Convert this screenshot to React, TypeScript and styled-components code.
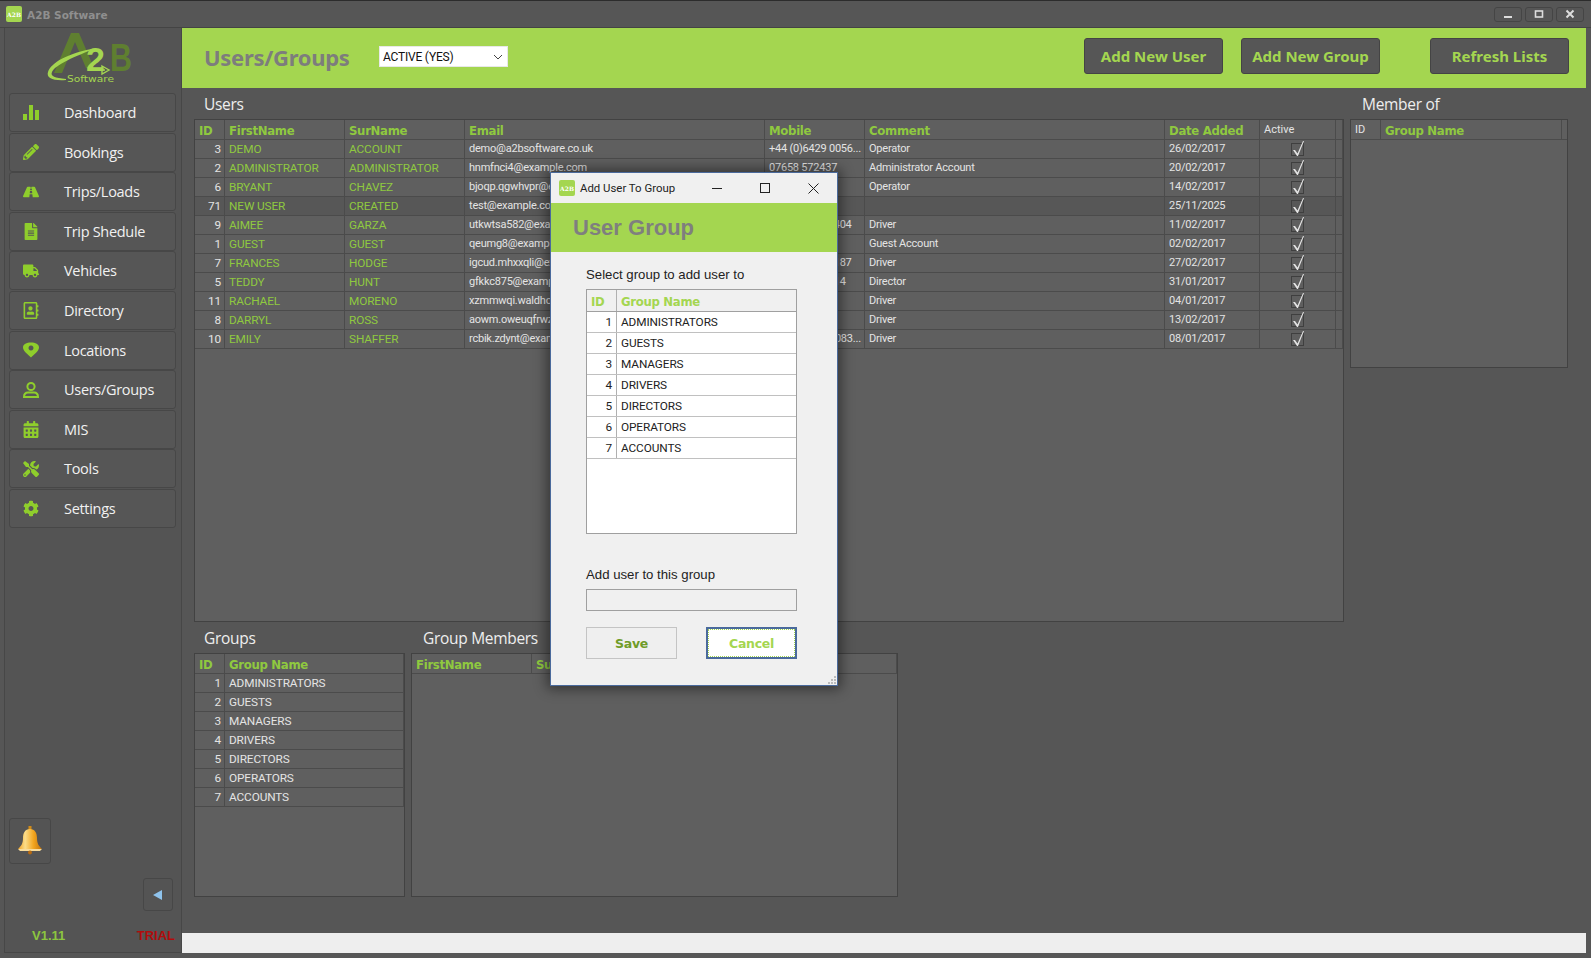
import React from "react";
import styled, { createGlobalStyle } from "styled-components";
import { FaPencilAlt, FaRoad, FaFileAlt, FaTruck, FaRegAddressBook, FaCalendarAlt, FaTools, FaCog } from "react-icons/fa";

const Global = createGlobalStyle`
  html, body { margin: 0; padding: 0; height: 100%; background: #565656; overflow: hidden; }
  #root { height: 100%; }
  * { box-sizing: border-box; }
`;

const GREEN = "#a4d650";
const TEXTGREEN = "#8fc93f";
const LINE = "#4b4b4b";

const Win = styled.div`
  position: relative; width: 1591px; height: 958px; background: #565656;
  font-family: "Roboto", "Liberation Sans", sans-serif; display: flex; flex-direction: column;
  border-top: 1px solid #2c2c2c;
`;
const TitleBar = styled.div`
  height: 27px; flex: none; display: flex; align-items: center; padding: 0 7px 0 6px; gap: 5px;
  border-bottom: 1px solid #444;
`;
const AppName = styled.div`
  font: bold 10.5px "DejaVu Sans", sans-serif; color: #8f8f8f; flex: 1; padding-top: 2px;
`;
const AppIcon = styled.div<{ $s: number }>`
  width: ${p => p.$s}px; height: ${p => p.$s}px; background: ${GREEN}; border-radius: 2px; color: #fff;
  font: bold 6px "DejaVu Serif", serif; display: flex; align-items: center; justify-content: center; flex: none;
`;
const WinBtns = styled.div` display: flex; gap: 3px; `;
const WinBtn = styled.div`
  width: 28px; height: 15px; border: 1px solid #454545; border-radius: 3px; display: flex; align-items: center; justify-content: center; color: #ddd;
`;
const Body = styled.div` flex: 1; display: flex; padding: 0 5px 5px 4px; min-height: 0; `;
const Side = styled.div`
  width: 178px; flex: none; border: 1px solid #474747; border-top: none; background: #545454;
  display: flex; flex-direction: column; padding: 0 5px 0 4px; position: relative;
`;
const LogoBox = styled.div` height: 65px; flex: none; display: flex; justify-content: flex-start; padding: 3px 0 0 30px; `;
const Nav = styled.div` display: flex; flex-direction: column; gap: 0.6px; `;
const NavItem = styled.div`
  height: 39px; border: 1px solid #474747; border-radius: 3px; display: flex; align-items: center;
  padding-left: 13px; gap: 25px; color: #f1f1f1; background: #565656;
  font: 14.5px "Open Sans", sans-serif; letter-spacing: -0.3px;
`;
const NavIcon = styled.div`
  width: 16px; height: 18px; display: flex; align-items: center; justify-content: center; flex: none; color: #8fce2c;
`;
const SideSpacer = styled.div` flex: 1; `;
const BellBtn = styled.div`
  width: 42px; height: 46px; border: 1px solid #474747; border-radius: 3px; display: flex; align-items: center; justify-content: center; margin-bottom: 14px;
`;
const ArrowRow = styled.div` display: flex; justify-content: flex-end; padding-right: 3px; `;
const ArrowBtn = styled.div`
  width: 30px; height: 33px; border: 1px solid #474747; border-radius: 3px; display: flex; align-items: center; justify-content: center;
`;
const SideFoot = styled.div`
  display: flex; justify-content: space-between; padding: 7px 1px 0 23px; height: 41px; align-items: center;
  font: bold 13px "Liberation Sans", sans-serif;
`;
const Ver = styled.span` color: #8cc63f; `;
const Trial = styled.span` color: #b00c0c; `;

const Main = styled.div` flex: 1; display: flex; flex-direction: column; min-width: 0; `;
const Header = styled.div`
  height: 60px; flex: none; background: ${GREEN}; display: flex; align-items: center; padding: 0 17px 4px 22px;
`;
const PageTitle = styled.div`
  font: bold 22px "Noto Sans", sans-serif; color: #7d7d7d; width: 175px; letter-spacing: -0.3px; margin-top: 1px;
`;
const Select = styled.div`
  width: 129px; height: 21px; background: #fff; border: 1px solid #e8e8e8; color: #111; font: 12px "Roboto", sans-serif;
  display: flex; align-items: center; justify-content: space-between; padding: 0 4px 0 3px; letter-spacing: -0.2px; margin-top: 1px;
`;
const HeadSpace = styled.div<{ $w?: number }>` flex: ${p => (p.$w ? "none" : 1)}; width: ${p => p.$w || 0}px; `;
const HeadBtn = styled.div`
  width: 139px; height: 36px; background: #565656; border: 1px solid #444; border-radius: 3px; color: ${GREEN};
  font: bold 15px "Noto Sans", sans-serif; display: flex; align-items: center; justify-content: center;
`;
const Content = styled.div` flex: 1; display: flex; flex-direction: column; padding: 0 17px 0 12px; min-height: 0; `;
const TopRow = styled.div` display: flex; gap: 6px; height: 534px; flex: none; `;
const BotRow = styled.div` display: flex; gap: 6px; height: 275px; flex: none; `;
const Col = styled.div<{ $w: number }>` width: ${p => p.$w}px; flex: none; display: flex; flex-direction: column; `;
const Label = styled.div<{ $ml?: number }>`
  height: 31px; flex: none; color: #eee; font: 15.5px "Open Sans", sans-serif; letter-spacing: -0.3px;
  padding: 5px 0 0 ${p => p.$ml ?? 10}px;
`;
const Grid = styled.div<{ $h?: number }>`
  flex: ${p => (p.$h ? "none" : 1)}; height: ${p => (p.$h ? `${p.$h}px` : "auto")};
  border: 1px solid #424242; background: #5f5f5f; overflow: hidden; position: relative;
`;
const Row = styled.div<{ $cols: string; $sel?: boolean; $h?: number }>`
  display: grid; grid-template-columns: ${p => p.$cols}; height: ${p => p.$h ?? 19}px;
  border-bottom: 1px solid ${LINE}; background: ${p => (p.$sel ? "#575757" : "transparent")};
`;
const Cell = styled.div<{ $c?: string; $right?: boolean; $small?: boolean }>`
  border-right: 1px solid ${LINE}; padding: 0 ${p => (p.$right ? 3 : 2)}px 1px 4px; display: flex; align-items: center; overflow: hidden; white-space: nowrap;
  justify-content: ${p => (p.$right ? "flex-end" : "flex-start")};
  font: ${p => (p.$small ? "11px" : "11.8px")} "Roboto", sans-serif; color: ${p => p.$c || "#e4e4e4"};
  letter-spacing: ${p => (p.$small ? "-0.22px" : "-0.12px")};
`;
const HCell = styled(Cell)<{ $plain?: boolean }>`
  font: ${p => (p.$plain ? "11px \"Roboto\", sans-serif" : "bold 11.7px \"DejaVu Sans\", sans-serif")};
  color: ${p => (p.$plain ? "#e4e4e4" : TEXTGREEN)}; letter-spacing: ${p => (p.$plain ? "0" : "-0.3px")};
  align-items: center; padding-top: ${p => (p.$plain ? 0 : 3)}px; padding-bottom: ${p => (p.$plain ? 1 : 0)}px;
`;
const CheckCell = styled(Cell)` justify-content: center; padding: 0; `;
const CheckBox = styled.div`
  width: 13px; height: 13px; border: 1px solid #3f3f3f; position: relative;
  svg { position: absolute; top: -3px; left: -1px; }
`;

const Dialog = styled.div`
  position: absolute; left: 550px; top: 171px; width: 288px; height: 514px; background: #f0f0f0;
  border: 1px solid #4a6a9c; box-shadow: 0 0 12px 3px rgba(0,0,0,.45); display: flex; flex-direction: column;
`;
const MTitle = styled.div`
  height: 30px; flex: none; display: flex; align-items: center; padding-left: 8px; font: 11.4px "Roboto", sans-serif; color: #222;
`;
const MTitleText = styled.div` flex: 1; white-space: nowrap; padding-left: 5px; `;
const MCtrl = styled.div` width: 48px; height: 30px; flex: none; display: flex; align-items: center; justify-content: center; color: #222; `;
const MBand = styled.div`
  height: 49px; flex: none; background: ${GREEN}; color: #7f7f7f; font: bold 22px "Liberation Sans", sans-serif; display: flex; align-items: center; padding: 0 0 0 22px;
`;
const MBody = styled.div` flex: 1; padding: 15px 40px 0 35px; display: flex; flex-direction: column; position: relative; `;
const MLabel = styled.div<{ $mt?: number }>`
  font: 13.2px "Liberation Sans", sans-serif; color: #222; height: 22px; margin-top: ${p => p.$mt ?? 0}px; white-space: nowrap;
`;
const MGrid = styled.div` height: 245px; flex: none; background: #fff; border: 1px solid #9f9f9f; `;
const MRow = styled.div<{ $h?: boolean }>`
  display: grid; grid-template-columns: 30px 1fr; height: ${p => (p.$h ? 22 : 21)}px; background: ${p => (p.$h ? "#f0f0f0" : "#fff")};
  border-bottom: 1px solid ${p => (p.$h ? "#a0a0a0" : "#c0c0c0")};
`;
const MCell = styled.div<{ $right?: boolean; $last?: boolean }>`
  border-right: ${p => (p.$last ? "none" : "1px solid #b0b0b0")}; padding: 0 4px; display: flex; align-items: center; font: 11.8px "Roboto", sans-serif; color: #222;
  justify-content: ${p => (p.$right ? "flex-end" : "flex-start")}; letter-spacing: -0.1px;
`;
const MHCell = styled(MCell)`
  font: bold 11.7px "DejaVu Sans", sans-serif; color: #a4d650; letter-spacing: -0.3px; padding-top: 3px;
`;
const MInput = styled.div` height: 22px; flex: none; border: 1px solid #9f9f9f; `;
const MBtns = styled.div` display: flex; justify-content: space-between; margin-top: 16px; `;
const MBtn = styled.div<{ $primary?: boolean }>`
  width: 91px; height: 32px; display: flex; align-items: center; justify-content: center; font: bold 12.5px "DejaVu Sans", sans-serif; letter-spacing: -0.3px;
  background: ${p => (p.$primary ? "#fff" : "#efefef")};
  color: ${p => (p.$primary ? "#a4d650" : "#6f9c28")};
  border: ${p => (p.$primary ? "2px solid #4a6a9c" : "1px solid #c4c4c4")};
  outline: ${p => (p.$primary ? "1px dotted #a4d650" : "none")}; outline-offset: -3px;
`;
const Grip = styled.svg` position: absolute; right: 0; bottom: 0; `;
const Status = styled.div` height: 20px; flex: none; background: #eee; position: relative; `;
const Gap = styled.div` flex: 1; `;

const Bars = () => (
  <svg width="16" height="18" viewBox="0 0 16 18" fill="currentColor"><rect x="0" y="10" width="4" height="6" /><rect x="6" y="1" width="4" height="15" /><rect x="12" y="6" width="4" height="10" /></svg>
);
const Pin = () => (
  <svg width="16" height="16" viewBox="0 0 16 16" fill="currentColor"><path fillRule="evenodd" d="M8 15.5 C6.5 13.5 0 9.5 0 5.5 C0 2 3.5 .5 8 .5 S16 2 16 5.5 C16 9.5 9.5 13.5 8 15.5Z M8 3.5a2.5 2.5 0 1 0 .01 0Z" /></svg>
);
const Person = () => (
  <svg width="16" height="18" viewBox="0 0 16 18" fill="none" stroke="currentColor" strokeWidth="2"><circle cx="8" cy="5.5" r="3.6" /><path d="M1 16c0-3.2 2-4.5 4-4.5h6c2 0 4 1.3 4 4.5z" /></svg>
);
const Logo = () => (
  <svg width="100" height="58" viewBox="0 0 100 58">
    <path d="M15 42 L32 2 L40 2 L55 37 L47 37 L36 11 L23 42Z" fill="#5f7f30" />
    <text x="71" y="40" fontFamily="Liberation Sans, sans-serif" fontWeight="bold" fontSize="39" textLength="22" lengthAdjust="spacingAndGlyphs" fill="#5f7f30">B</text>
    <text x="47" y="40" fontFamily="Liberation Sans, sans-serif" fontWeight="bold" fontSize="34" fill={GREEN}>2</text>
    <path d="M27 49 C14 50 7 47 9 41 C12 32 28 22 58 17 C36 25 16 34 13 41 C11 45 16 47 27 48Z" fill={GREEN} />
    <path d="M50 39 H66 M63 35 L70 39 L63 43Z" stroke={GREEN} strokeWidth="1.4" fill="none" />
    <text x="28" y="51" fontFamily="DejaVu Sans, sans-serif" fontSize="9" textLength="47" lengthAdjust="spacingAndGlyphs" fill={GREEN}>Software</text>
  </svg>
);
const Bell = () => (
  <svg width="26" height="30" viewBox="0 0 26 30">
    <defs><linearGradient id="bellg" x1="0" x2="1"><stop offset="0" stopColor="#f0a020" /><stop offset=".3" stopColor="#fbdd8a" /><stop offset=".65" stopColor="#f2a51e" /><stop offset="1" stopColor="#c0720c" /></linearGradient></defs>
    <rect x="11.5" y="0" width="3" height="4" fill="#d08a18" />
    <path d="M13 3c5 0 7 4 7 9 0 6 2 8 5 11H1c3-3 5-5 5-11 0-5 2-9 7-9z" fill="url(#bellg)" />
    <path d="M1 23h24l-2 2H3z" fill="#f8dc9c" />
    <circle cx="13" cy="26.5" r="2" fill="#b86a10" />
  </svg>
);
const Check = () => (
  <svg width="14" height="17" viewBox="0 0 14 17" fill="#e4e4e4"><path d="M2 9 L4 9 L6.5 12.5 L12 0 L13 0 L7 15 L6 15Z" /></svg>
);

const navItems: [string, React.ReactNode][] = [
  ["Dashboard", <Bars />], ["Bookings", <FaPencilAlt size={16} />], ["Trips/Loads", <FaRoad size={16} />],
  ["Trip Shedule", <FaFileAlt size={17} />], ["Vehicles", <FaTruck size={16} />], ["Directory", <FaRegAddressBook size={17} />],
  ["Locations", <Pin />], ["Users/Groups", <Person />], ["MIS", <FaCalendarAlt size={17} />],
  ["Tools", <FaTools size={16} />], ["Settings", <FaCog size={17} />],
];

const users = [
  ["3", "DEMO", "ACCOUNT", "demo@a2bsoftware.co.uk", "+44 (0)6429 0056...", "Operator", "26/02/2017"],
  ["2", "ADMINISTRATOR", "ADMINISTRATOR", "hnmfnci4@example.com", "07658 572437", "Administrator Account", "20/02/2017"],
  ["6", "BRYANT", "CHAVEZ", "bjoqp.qgwhvpr@example.com", "", "Operator", "14/02/2017"],
  ["71", "NEW USER", "CREATED", "test@example.com", "", "", "25/11/2025"],
  ["9", "AIMEE", "GARZA", "utkwtsa582@example.com", "+44 7700 900404", "Driver", "11/02/2017"],
  ["1", "GUEST", "GUEST", "qeumg8@example.com", "", "Guest Account", "02/02/2017"],
  ["7", "FRANCES", "HODGE", "igcud.mhxxqli@example.com", "+44 7700 900187", "Driver", "27/02/2017"],
  ["5", "TEDDY", "HUNT", "gfkkc875@example.com", "+44 7700 90014", "Director", "31/01/2017"],
  ["11", "RACHAEL", "MORENO", "xzmmwqi.waldhorn@example.com", "", "Driver", "04/01/2017"],
  ["8", "DARRYL", "ROSS", "aowm.oweuqfrwz@example.com", "", "Driver", "13/02/2017"],
  ["10", "EMILY", "SHAFFER", "rcbik.zdynt@example.com", "+44 (0)7700 9083...", "Driver", "08/01/2017"],
];
const groups = ["ADMINISTRATORS", "GUESTS", "MANAGERS", "DRIVERS", "DIRECTORS", "OPERATORS", "ACCOUNTS"];
const UC = "30px 120px 120px 300px 100px 300px 95px 76px 7px";
const GC = "30px 1fr";

export default function App() {
  return (
    <Win>
      <Global />
      <TitleBar>
        <AppIcon $s={16}>A2B</AppIcon>
        <AppName>A2B Software</AppName>
        <WinBtns>
          <WinBtn><svg width="10" height="10"><rect x="1" y="7" width="8" height="2" fill="currentColor" /></svg></WinBtn>
          <WinBtn><svg width="10" height="10"><rect x="1.5" y="2" width="7" height="6" fill="none" stroke="currentColor" strokeWidth="1.6" /></svg></WinBtn>
          <WinBtn><svg width="10" height="10"><path d="M1.5 1.5l7 7M8.5 1.5l-7 7" stroke="currentColor" strokeWidth="2" /></svg></WinBtn>
        </WinBtns>
      </TitleBar>
      <Body>
        <Side>
          <LogoBox><Logo /></LogoBox>
          <Nav>
            {navItems.map(([t, ic]) => (<NavItem key={t}><NavIcon>{ic}</NavIcon><span>{t}</span></NavItem>))}
          </Nav>
          <SideSpacer />
          <BellBtn><Bell /></BellBtn>
          <ArrowRow>
            <ArrowBtn><svg width="12" height="12"><path d="M1 6 L10 1 V11Z" fill="#8fc3ec" /></svg></ArrowBtn>
          </ArrowRow>
          <SideFoot><Ver>V1.11</Ver><Trial>TRIAL</Trial></SideFoot>
        </Side>
        <Main>
          <Header>
            <PageTitle>Users/Groups</PageTitle>
            <Select>ACTIVE (YES)<svg width="10" height="8" viewBox="0 0 10 8" fill="none" stroke="#444"><path d="M1 2l4 4 4-4" /></svg></Select>
            <HeadSpace />
            <HeadBtn>Add New User</HeadBtn>
            <HeadSpace $w={18} />
            <HeadBtn>Add New Group</HeadBtn>
            <HeadSpace $w={50} />
            <HeadBtn>Refresh Lists</HeadBtn>
          </Header>
          <Content>
            <TopRow>
              <Col $w={1150}>
                <Label>Users</Label>
                <Grid>
                  <Row $cols={UC} $h={20}>
                    {["ID", "FirstName", "SurName", "Email", "Mobile", "Comment", "Date Added"].map(h => <HCell key={h}>{h}</HCell>)}
                    <HCell $plain>Active</HCell>
                    <HCell />
                  </Row>
                  {users.map(u => (
                    <Row key={u[0]} $cols={UC} $sel={u[0] === "71"}>
                      <Cell $right>{u[0]}</Cell>
                      <Cell $c={TEXTGREEN}>{u[1]}</Cell>
                      <Cell $c={TEXTGREEN}>{u[2]}</Cell>
                      <Cell $small>{u[3]}</Cell>
                      <Cell $small>{u[4]}</Cell>
                      <Cell $small>{u[5]}</Cell>
                      <Cell $small>{u[6]}</Cell>
                      <CheckCell><CheckBox><Check /></CheckBox></CheckCell>
                      <Cell />
                    </Row>
                  ))}
                </Grid>
              </Col>
              <Col $w={218}>
                <Label $ml={12}>Member of</Label>
                <Grid $h={249}>
                  <Row $cols="30px 181px 7px" $h={20}>
                    <HCell $plain>ID</HCell>
                    <HCell>Group Name</HCell>
                    <HCell />
                  </Row>
                </Grid>
              </Col>
            </TopRow>
            <BotRow>
              <Col $w={211}>
                <Label>Groups</Label>
                <Grid>
                  <Row $cols={GC} $h={20}>
                    <HCell>ID</HCell><HCell>Group Name</HCell>
                  </Row>
                  {groups.map((g, i) => (
                    <Row key={g} $cols={GC}><Cell $right>{i + 1}</Cell><Cell>{g}</Cell></Row>
                  ))}
                </Grid>
              </Col>
              <Col $w={487}>
                <Label $ml={12}>Group Members</Label>
                <Grid>
                  <Row $cols="120px 1fr" $h={20}>
                    <HCell>FirstName</HCell><HCell>SurName</HCell>
                  </Row>
                </Grid>
              </Col>
            </BotRow>
            <Gap />
          </Content>
          <Status />
        </Main>
      </Body>
      <Dialog>
        <MTitle>
          <AppIcon $s={16}>A2B</AppIcon>
          <MTitleText>Add User To Group</MTitleText>
          <MCtrl><svg width="11" height="11" stroke="currentColor"><path d="M0 5.5h10" /></svg></MCtrl>
          <MCtrl><svg width="11" height="11" fill="none" stroke="currentColor"><rect x=".5" y=".5" width="9" height="9" /></svg></MCtrl>
          <MCtrl><svg width="11" height="11" stroke="currentColor"><path d="M.5.5l10 10M10.5.5l-10 10" /></svg></MCtrl>
        </MTitle>
        <MBand>User Group</MBand>
        <MBody>
          <MLabel>Select group to add user to</MLabel>
          <MGrid>
            <MRow $h><MHCell>ID</MHCell><MHCell $last>Group Name</MHCell></MRow>
            {groups.map((g, i) => (
              <MRow key={g}><MCell $right>{i + 1}</MCell><MCell $last>{g}</MCell></MRow>
            ))}
          </MGrid>
          <MLabel $mt={33}>Add user to this group</MLabel>
          <MInput />
          <MBtns><MBtn>Save</MBtn><MBtn $primary>Cancel</MBtn></MBtns>
          <Grip width="10" height="10" fill="#bbb"><rect x="7" y="1" width="2" height="2" /><rect x="4" y="4" width="2" height="2" /><rect x="7" y="4" width="2" height="2" /><rect x="1" y="7" width="2" height="2" /><rect x="4" y="7" width="2" height="2" /><rect x="7" y="7" width="2" height="2" /></Grip>
        </MBody>
      </Dialog>
    </Win>
  );
}
